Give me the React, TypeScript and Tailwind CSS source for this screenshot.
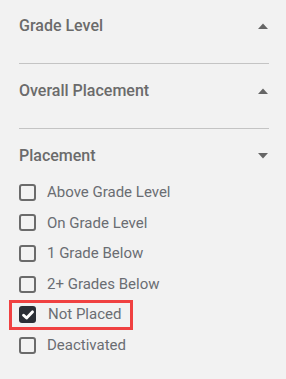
import React from 'react';

const options = [
  { label: 'Above Grade Level', checked: false },
  { label: 'On Grade Level', checked: false },
  { label: '1 Grade Below', checked: false },
  { label: '2+ Grades Below', checked: false },
  { label: 'Not Placed', checked: true, highlight: true },
  { label: 'Deactivated', checked: false },
];

const Caret: React.FC<{ up?: boolean }> = ({ up }) => (
  <svg width="10" height="6" viewBox="0 0 10 6" className="text-[#666]">
    {up ? <path d="M0 6 L5 0.5 L10 6 Z" fill="currentColor" /> : <path d="M0 0 L5 5.5 L10 0 Z" fill="currentColor" />}
  </svg>
);

const Checkbox: React.FC<{ checked: boolean }> = ({ checked }) =>
  checked ? (
    <span className="w-[17px] h-[17px] rounded-[3px] bg-[#2b2f36] flex items-center justify-center">
      <svg width="12" height="10" viewBox="0 0 12 10">
        <path d="M1.6 5.2 L4.6 8 L10.4 1.9" stroke="white" strokeWidth="2.9" fill="none" strokeLinecap="round" strokeLinejoin="round" />
      </svg>
    </span>
  ) : (
    <span className="w-[17px] h-[17px] rounded-[3px] border-2 border-[#6b6b6b] bg-transparent" />
  );

const Header: React.FC<{ title: string; open?: boolean }> = ({ title, open }) => (
  <div className="flex items-center justify-between h-5">
    <span className="text-[16px] font-medium text-[#6b6b6b]">{title}</span>
    <span className="mr-[1px]">
      <Caret up={!open} />
    </span>
  </div>
);

export default function App() {
  return (
    <div className="min-h-screen w-[286px] bg-[#f2f2f2] pl-[19px] pr-[17px]" style={{ fontFamily: 'Roboto, "Liberation Sans", sans-serif' }}>
      <div className="pt-4 pb-[27px] border-b border-[#c4c4c4]">
        <Header title="Grade Level" />
      </div>
      <div className="pt-[17px] pb-[27px] border-b border-[#c4c4c4]">
        <Header title="Overall Placement" />
      </div>
      <div className="pt-[17px]">
        <Header title="Placement" open />
        <div className="mt-[11px] flex flex-col">
          {options.map((o) => (
            <div key={o.label} className="h-[30.6px] flex items-center">
              <div
                className={`flex items-center h-[30px] ${o.highlight ? 'border-[3px] border-[#f04141] -ml-[10px] pl-[7px] pr-[9px]' : ''}`}
              >
                <Checkbox checked={o.checked} />
                <span className={`text-[15px] text-[#6a6d72] ${o.highlight ? 'ml-[12px]' : 'ml-[11px]'}`}>{o.label}</span>
              </div>
            </div>
          ))}
        </div>
      </div>
    </div>
  );
}
